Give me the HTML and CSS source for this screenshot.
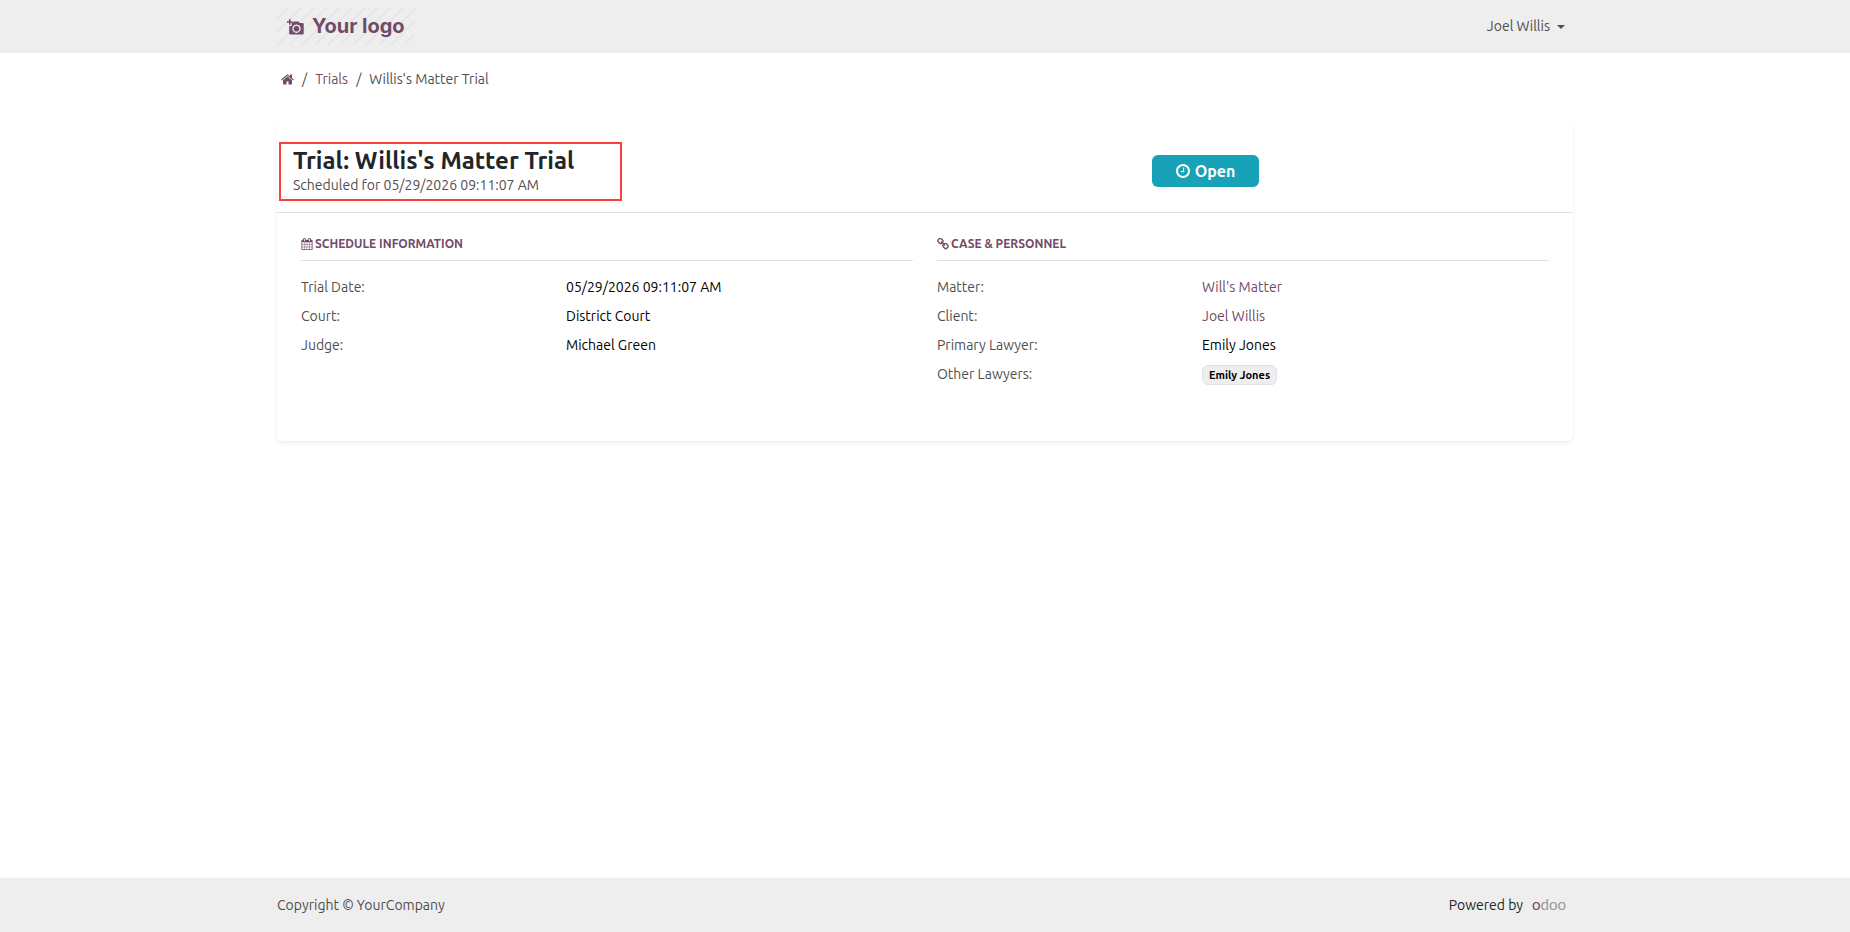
FILE: index.html
```html
<!DOCTYPE html>
<html lang="en">
<head>
    <meta charset="UTF-8">
    <meta name="viewport" content="width=device-width, initial-scale=1.0">
    <title>Willis's Matter Trial</title>
    <link rel="stylesheet" href="styles.css">
</head>
<body>
    <header class="navbar">
        <div class="container">
            <a href="#" class="logo">
                <svg class="logo-icon" viewBox="0 0 17 16" aria-hidden="true">
                    <path d="M0 2.2h2V0h1.500v2.200h2v1.500h-2v2h-1.500v-2h-2z"/>
                    <path fill-rule="evenodd" d="M6.500 3.200V2.500h5l1 1.500H15.500q1.200 0 1.200 1.200V14.500q0 1-1.200 1H3.500q-1.300 0-1.300-1V7h2.500V3.200zM9.500 5.500a4.200 4.200 0 1 0 .01 0z"/>
                    <circle cx="9.500" cy="9.700" r="2.800"/>
                </svg>
                <span>Your logo</span>
            </a>
            <button type="button" class="user-menu">Joel Willis <span class="caret"></span></button>
        </div>
    </header>

    <main class="container">
        <!-- Breadcrumb -->
        <nav class="breadcrumb" aria-label="breadcrumb">
            <a href="#" aria-label="Home">
                <svg class="icon" viewBox="64 128 1664 1536" aria-hidden="true"><path d="M1472 992v480q0 26-19 45t-45 19h-384v-384h-256v384h-384q-26 0-45-19t-19-45v-480q0-1 .5-3t.5-3l575-474 575 474q1 2 1 6zm223-69l-62 74q-8 9-21 11h-3q-13 0-21-7l-692-577-692 577q-12 8-24 7-13-2-21-11l-62-74q-8-10-7-23.500t11-21.500l719-599q32-26 76-26t76 26l244 204v-195q0-14 9-23t23-9h192q14 0 23 9t9 23v408l219 182q10 8 11 21.500t-7 23.500z"/></svg>
            </a>
            <span>/</span>
            <a href="#">Trials</a>
            <span>/</span>
            <span>Willis's Matter Trial</span>
        </nav>

        <div class="card">
            <div class="card-header">
                <div class="title">
                    <h1>Trial: Willis's Matter Trial</h1>
                    <p>Scheduled for 05/29/2026 09:11:07 AM</p>
                </div>
                <div class="status">
                    <span class="status-badge">
                        <svg class="icon" viewBox="128 128 1536 1536" aria-hidden="true"><path d="M1024 544v448q0 14-9 23t-23 9h-320q-14 0-23-9t-9-23v-64q0-14 9-23t23-9h224v-352q0-14 9-23t23-9h64q14 0 23 9t9 23zm416 352q0-148-73-273t-198-198-273-73-273 73-198 198-73 273 73 273 198 198 273 73 273-73 198-198 73-273zm224 0q0 209-103 385.500t-279.500 279.500-385.500 103-385.500-103-279.500-279.500-103-385.500 103-385.500 279.500-279.500 385.500-103 385.500 103 279.500 279.500 103 385.500z"/></svg>
                        Open
                    </span>
                </div>
            </div>

            <div class="card-body">
                <section>
                    <h2>
                        <svg class="icon" viewBox="64 0 1664 1792" aria-hidden="true"><path d="M192 1664h288v-288h-288v288zm352 0h320v-288h-320v288zm-352-352h288v-320h-288v320zm352 0h320v-320h-320v320zm-352-384h288v-288h-288v288zm736 736h320v-288h-320v288zm-384-736h320v-288h-320v288zm768 736h288v-288h-288v288zm-384-352h320v-320h-320v320zm-352-864v-288q0-13-9.500-22.500t-22.500-9.500h-64q-13 0-22.500 9.500t-9.500 22.500v288q0 13 9.500 22.500t22.500 9.500h64q13 0 22.500-9.500t9.500-22.500zm736 864h288v-320h-288v320zm-384-384h320v-288h-320v288zm384 0h288v-288h-288v288zm32-480v-288q0-13-9.500-22.500t-22.500-9.500h-64q-13 0-22.500 9.500t-9.500 22.500v288q0 13 9.500 22.500t22.500 9.500h64q13 0 22.500-9.500t9.500-22.500zm384-64v1280q0 52-38 90t-90 38h-1408q-52 0-90-38t-38-90v-1280q0-52 38-90t90-38h128v-96q0-66 47-113t113-47h64q66 0 113 47t47 113v96h384v-96q0-66 47-113t113-47h64q66 0 113 47t47 113v96h128q52 0 90 38t38 90z"/></svg>
                        Schedule Information
                    </h2>
                    <dl>
                        <dt>Trial Date:</dt>
                        <dd>05/29/2026 09:11:07 AM</dd>
                        <dt>Court:</dt>
                        <dd>District Court</dd>
                        <dt>Judge:</dt>
                        <dd>Michael Green</dd>
                    </dl>
                </section>

                <section>
                    <h2>
                        <svg class="icon" viewBox="64 64 1664 1664" aria-hidden="true"><path d="M1520 1216q0-40-28-68l-208-208q-28-28-68-28-42 0-72 32 3 3 19 18.500t21.500 21.500 15 19 13 25.500 3.500 27.500q0 40-28 68t-68 28q-15 0-27.500-3.500t-25.500-13-19-15-21.500-21.500-18.500-19q-33 31-33 73 0 40 28 68l206 207q27 27 68 27 40 0 68-26l147-146q28-28 28-67zm-703-705q0-40-28-68l-206-207q-28-28-68-28-39 0-68 27l-147 146q-28 28-28 67 0 40 28 68l208 208q27 27 68 27 42 0 72-31-3-3-19-18.500t-21.500-21.500-15-19-13-25.500-3.500-27.500q0-40 28-68t68-28q15 0 27.500 3.500t25.500 13 19 15 21.500 21.500 18.500 19q33-31 33-73zm895 705q0 120-85 203l-147 146q-83 83-203 83-121 0-204-85l-206-207q-83-83-83-203 0-123 88-209l-88-88q-86 88-208 88-120 0-204-84l-208-208q-84-84-84-204t85-203l147-146q83-83 203-83 121 0 204 85l206 207q83 83 83 203 0 123-88 209l88 88q86-88 208-88 120 0 204 84l208 208q84 84 84 204z"/></svg>
                        Case &amp; Personnel
                    </h2>
                    <dl>
                        <dt>Matter:</dt>
                        <dd><a href="#">Will's Matter</a></dd>
                        <dt>Client:</dt>
                        <dd><a href="#">Joel Willis</a></dd>
                        <dt>Primary Lawyer:</dt>
                        <dd>Emily Jones</dd>
                        <dt>Other Lawyers:</dt>
                        <dd><span class="tag">Emily Jones</span></dd>
                    </dl>
                </section>
            </div>
        </div>
    </main>

    <footer>
        <div class="container">
            <span class="copyright">Copyright © YourCompany</span>
            <span class="powered">Powered by <a href="#" class="odoo"><span>o</span>doo</a></span>
        </div>
    </footer>
</body>
</html>
```

FILE: styles.css
```css
:root {
    --primary-color: #714b67;
    --info-color: #17a2b8;
    --gray-light: #eeeeee;
    --border-color: #dee2e6;
    --text-muted: #4f4f4f;
}

* {
    box-sizing: border-box;
    margin: 0;
    padding: 0;
}

body {
    display: flex;
    flex-direction: column;
    min-height: 100vh;
    font-family: "Ubuntu", "Noto Sans", sans-serif;
    font-size: 14px;
    line-height: 21px;
    color: #212529;
    background-color: #fff;
}

a {
    color: var(--primary-color);
    text-decoration: none;
}

.container {
    width: 100%;
    max-width: 1320px;
    margin: 0 auto;
    padding: 0 12px;
}

.icon {
    width: 13px;
    height: 13px;
    fill: currentColor;
}

/* Top bar */
.navbar {
    background-color: var(--gray-light);
    padding: 8px 0;
}

.navbar .container {
    display: flex;
    justify-content: space-between;
    align-items: center;
}

.logo {
    display: flex;
    align-items: center;
    gap: 8px;
    height: 37px;
    padding: 0 10px;
    font-family: "Inter", sans-serif;
    font-size: 20px;
    font-weight: 700;
    background: repeating-linear-gradient(135deg, #eeeeee 0 7px, #e7e7e7 7px 9px);
}

.logo-icon {
    width: 17px;
    height: 16px;
    fill: currentColor;
}

.user-menu {
    display: flex;
    align-items: center;
    gap: 7px;
    padding: 8px;
    border: none;
    background: none;
    color: var(--text-muted);
    font: inherit;
    cursor: pointer;
}

.caret {
    border-top: 4px solid currentColor;
    border-left: 4px solid transparent;
    border-right: 4px solid transparent;
}

main {
    flex: 1;
}

.breadcrumb {
    display: flex;
    align-items: center;
    gap: 8px;
    padding: 16px 4px;
    margin-bottom: 16px;
    color: var(--text-muted);
}

.breadcrumb a {
    display: flex;
}

/* Trial card */
.card {
    border-radius: 6px;
    box-shadow: 0 2px 4px rgba(0, 0, 0, 0.075);
}

.card-header {
    display: grid;
    grid-template-columns: repeat(12, 1fr);
    align-items: center;
    column-gap: 24px;
    padding: 24px 16px 16px;
    border-bottom: 1px solid var(--border-color);
}

.title {
    position: relative;
    grid-column: span 8;
    justify-self: start;
    color: var(--text-muted);
}

/* Highlight frame around the title */
.title::after {
    content: "";
    position: absolute;
    top: -4px;
    bottom: -5px;
    left: -14px;
    width: 339px;
    border: 2px solid #f93e3e;
}

.title h1 {
    font-size: 24px;
    font-weight: 600;
    line-height: 29px;
    color: #212529;
}

.status {
    grid-column: span 4;
}

.status-badge {
    display: inline-flex;
    align-items: center;
    gap: 5px;
    padding: 6px 24px;
    border-radius: 6px;
    background-color: var(--info-color);
    color: #fff;
    font-size: 16px;
    font-weight: 700;
    line-height: 20px;
}

.status-badge .icon {
    width: 14px;
    height: 14px;
}

.card-body {
    display: grid;
    grid-template-columns: 1fr 1fr;
    column-gap: 24px;
    padding: 24px 24px 48px;
}

.card-body h2 {
    display: flex;
    align-items: center;
    gap: 2px;
    padding-bottom: 9px;
    margin-bottom: 16px;
    border-bottom: 1px solid var(--border-color);
    color: var(--primary-color);
    font-size: 12px;
    font-weight: 600;
    line-height: 14px;
    text-transform: uppercase;
}

.card-body h2 .icon {
    width: 12px;
    height: 12px;
}

dl {
    display: grid;
    grid-template-columns: 5fr 7fr;
    row-gap: 8px;
    margin-right: -24px;
    margin-bottom: 8px;
}

dt {
    color: var(--text-muted);
}

dd {
    color: #000;
}

.tag {
    display: inline-block;
    padding: 3px 6px;
    border: 1px solid var(--border-color);
    border-radius: 6px;
    background-color: var(--gray-light);
    font-size: 11px;
    font-weight: 700;
    line-height: 12px;
}

/* Footer */
footer {
    background-color: var(--gray-light);
    padding: 17px 0 16px;
}

footer .container {
    display: flex;
    justify-content: space-between;
}

.copyright {
    color: var(--text-muted);
}

.powered {
    display: flex;
    gap: 9px;
    padding-right: 7px;
}

.odoo {
    font-family: "Lato", sans-serif;
    font-size: 15px;
    line-height: 18px;
    color: #999;
}

.odoo span {
    color: var(--primary-color);
}
```
